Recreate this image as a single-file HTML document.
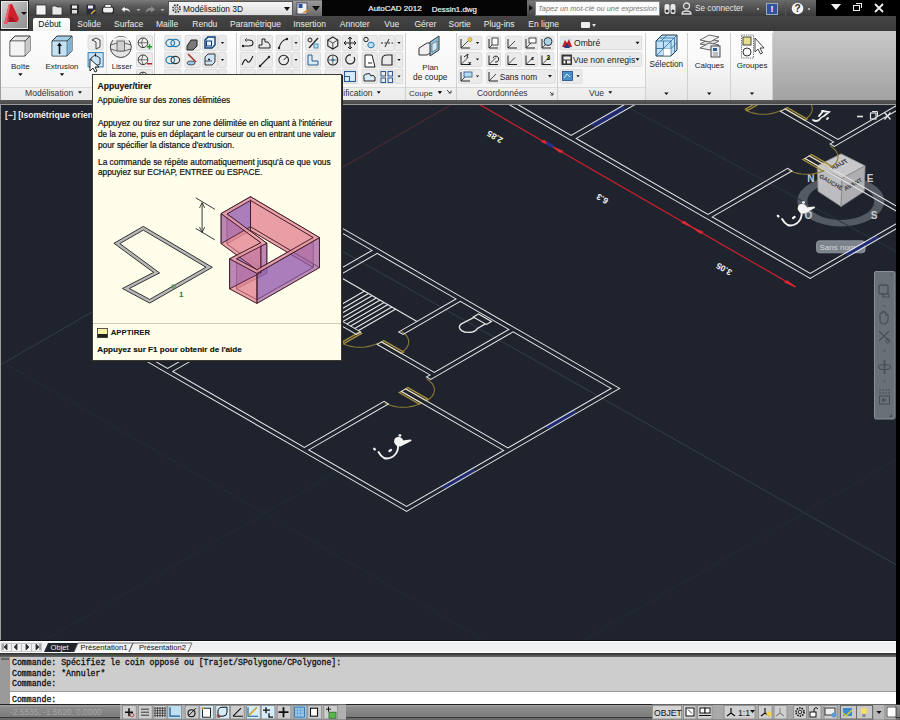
<!DOCTYPE html>
<html><head><meta charset="utf-8">
<style>
*{margin:0;padding:0;box-sizing:border-box}
html,body{width:900px;height:720px;overflow:hidden;background:#1e232d;font-family:"Liberation Sans",sans-serif}
.a{position:absolute}
.t{position:absolute;white-space:nowrap;line-height:1}
</style></head><body>
<div class="a" style="left:0px;top:0px;width:322px;height:16px;background:linear-gradient(#7a7a7a,#5a5a5a 40%,#3e3e3e)"></div>
<div class="a" style="left:322px;top:0px;width:205px;height:16px;background:#050505"></div>
<div class="a" style="left:527px;top:0px;width:289px;height:16px;background:linear-gradient(#6a6a6a,#3a3a3a)"></div>
<div class="a" style="left:816px;top:0px;width:84px;height:17px;background:#000"></div>
<svg class="a" style="left:28px;top:0" width="300" height="17" viewBox="28 0 300 17"><rect x="36" y="5" width="10" height="10" fill="#f4f4f4" stroke="#333" stroke-width="0.8"/><path d="M52,6 h4 l1,1 h5 v8 h-10z" fill="#e8e8e8" stroke="#333" stroke-width="0.8"/><rect x="70" y="4.5" width="9" height="10" rx="1" fill="#2a2a2a"/><rect x="72" y="5.5" width="5" height="3" fill="#eee"/><rect x="72" y="10" width="5" height="3.5" fill="#ddd"/><rect x="86.5" y="4.5" width="9" height="10" rx="1" fill="#2a2a40"/><rect x="88" y="5.5" width="5" height="3" fill="#eee"/><path d="M91,14 l4,-4" stroke="#e0b030" stroke-width="1.5"/><rect x="102.5" y="7" width="11" height="6" rx="2" fill="#f0f0f0" stroke="#222" stroke-width="1.2"/><rect x="105" y="4.5" width="6" height="3" fill="#eee" stroke="#222" stroke-width="0.6"/><path d="M121,9.5 l4,-3.5 v2 c3,0 5,1 5.5,5 c-1.5,-2 -3,-2.5 -5.5,-2.5 v2z" fill="#f0f0f0" stroke="#333" stroke-width="0.5"/><path d="M136.5,9 h4 l-2,2.5z" fill="#aaa"/><path d="M155,9.5 l-4,-3.5 v2 c-3,0 -5,1 -5.5,5 c1.5,-2 3,-2.5 5.5,-2.5 v2z" fill="#8a8a8a"/><path d="M160.5,9 h4 l-2,2.5z" fill="#aaa"/></svg>
<div class="a" style="left:168px;top:1px;width:125px;height:15px;background:linear-gradient(#f6f6f6,#dcdcdc);border:1px solid #555"></div>
<svg class="a" style="left:171px;top:3px" width="11" height="11" viewBox="0 0 11 11"><circle cx="5.5" cy="5.5" r="3.6" fill="none" stroke="#333" stroke-width="1.6" stroke-dasharray="1.6 1.2"/><circle cx="5.5" cy="5.5" r="1.6" fill="none" stroke="#333" stroke-width="0.8"/></svg>
<div class="t" style="left:183.0px;top:5.1px;font-size:8.4px;font-weight:normal;color:#111;font-family:'Liberation Sans';font-style:normal;">Modélisation 3D</div>
<div class="a" style="left:284px;top:7px;border-left:3px solid transparent;border-right:3px solid transparent;border-top:4px solid #111"></div>
<div class="a" style="left:293px;top:1px;width:29px;height:15px;background:linear-gradient(#9a9a9a,#6a6a6a)"></div>
<svg class="a" style="left:296px;top:2px" width="14" height="13" viewBox="0 0 14 13"><rect x="1" y="1" width="10" height="11" fill="#f0f0f0" stroke="#335" stroke-width="0.8"/><rect x="2.5" y="2" width="4" height="4" fill="#2a50a0"/><path d="M6,11 l6,-4 l1,3z" fill="#d08020"/></svg>
<div class="a" style="left:312px;top:6px;border-left:4px solid transparent;border-right:4px solid transparent;border-top:5px solid #111"></div>
<div class="t" style="left:368.3px;top:5.4px;font-size:8.0px;font-weight:normal;color:#f0f0f0;font-family:'Liberation Sans';font-style:normal;-webkit-text-stroke:0.2px #f0f0f0">AutoCAD 2012</div>
<div class="t" style="left:431.7px;top:5.5px;font-size:7.9px;font-weight:normal;color:#f0f0f0;font-family:'Liberation Sans';font-style:normal;-webkit-text-stroke:0.2px #f0f0f0">Dessin1.dwg</div>
<div class="a" style="left:527px;top:1px;width:8px;height:15px;background:linear-gradient(#777,#444)"></div>
<div class="a" style="left:529px;top:5px;border-top:3.5px solid transparent;border-bottom:3.5px solid transparent;border-left:4px solid #111"></div>
<div class="a" style="left:535px;top:1px;width:125px;height:15px;background:#fbfbfb;border:1px solid #888"></div>
<div class="t" style="left:538.0px;top:5.2px;font-size:7.4px;font-weight:normal;color:#777;font-family:'Liberation Sans';font-style:italic;">Tapez un mot-clé ou une expression</div>
<svg class="a" style="left:664px;top:2px" width="12" height="13" viewBox="0 0 12 13"><rect x="0.5" y="2" width="5" height="10" rx="2" fill="#e8e8e8"/><rect x="6.5" y="2" width="5" height="10" rx="2" fill="#e8e8e8"/><circle cx="3" cy="9" r="1.6" fill="#333"/><circle cx="9" cy="9" r="1.6" fill="#333"/></svg>
<svg class="a" style="left:681px;top:2px" width="11" height="13" viewBox="0 0 11 13"><circle cx="5.5" cy="4" r="3" fill="none" stroke="#ddd" stroke-width="1.3"/><path d="M1,12 c0,-4 9,-4 9,0z" fill="none" stroke="#ddd" stroke-width="1.3"/></svg>
<div class="t" style="left:695.0px;top:5.1px;font-size:8.2px;font-weight:normal;color:#e8e8e8;font-family:'Liberation Sans';font-style:normal;">Se connecter</div>
<div class="a" style="left:757px;top:8px;width:2px;height:2px;background:#aaa"></div>
<div class="a" style="left:766px;top:3px;width:12px;height:12px;background:#3050a0;border:1px solid #9ab"></div>
<div class="t" style="left:770.5px;top:4.9px;font-size:9px;font-weight:bold;color:#fff;font-family:'Liberation Sans';font-style:normal;">!</div>
<div class="a" style="left:785px;top:1px;width:1px;height:15px;background:#555"></div>
<svg class="a" style="left:791px;top:2px" width="13" height="13" viewBox="0 0 13 13"><circle cx="6.5" cy="6.5" r="5.8" fill="#f4f4f4"/><text x="6.5" y="10.3" font-family="Liberation Sans" font-weight="bold" font-size="10" text-anchor="middle" fill="#333">?</text></svg>
<div class="a" style="left:808px;top:8px;width:2px;height:2px;background:#aaa"></div>
<div class="a" style="left:831px;top:4px;border-left:5px solid transparent;border-right:5px solid transparent;border-top:6px solid #f0f0f0"></div>
<div class="a" style="left:853px;top:5px;width:7px;height:6px;border:1.5px solid #eee;background:#000"></div>
<div class="a" style="left:856px;top:3px;width:6px;height:5px;border:1.5px solid #eee;border-left:none;border-bottom:none"></div>
<svg class="a" style="left:874px;top:3px" width="10" height="10" viewBox="0 0 10 10"><path d="M1,1 L9,9 M9,1 L1,9" stroke="#f0f0f0" stroke-width="1.8"/></svg>
<div class="a" style="left:0px;top:16px;width:896px;height:15px;background:linear-gradient(#454545,#3a3a3a)"></div>
<div class="a" style="left:33px;top:18px;width:37px;height:13px;background:linear-gradient(#ffffff,#f2f2f2);border-radius:2px 2px 0 0"></div>
<div class="t" style="left:38.3px;top:20.1px;font-size:8.5px;font-weight:normal;color:#111;font-family:'Liberation Sans';font-style:normal;">Début</div>
<div class="t" style="left:77.3px;top:20.1px;font-size:8.5px;font-weight:normal;color:#ececec;font-family:'Liberation Sans';font-style:normal;">Solide</div>
<div class="t" style="left:114.0px;top:20.1px;font-size:8.5px;font-weight:normal;color:#ececec;font-family:'Liberation Sans';font-style:normal;">Surface</div>
<div class="t" style="left:156.0px;top:20.1px;font-size:8.5px;font-weight:normal;color:#ececec;font-family:'Liberation Sans';font-style:normal;">Maille</div>
<div class="t" style="left:192.3px;top:20.1px;font-size:8.5px;font-weight:normal;color:#ececec;font-family:'Liberation Sans';font-style:normal;">Rendu</div>
<div class="t" style="left:230.0px;top:20.1px;font-size:8.5px;font-weight:normal;color:#ececec;font-family:'Liberation Sans';font-style:normal;">Paramétrique</div>
<div class="t" style="left:293.3px;top:20.1px;font-size:8.5px;font-weight:normal;color:#ececec;font-family:'Liberation Sans';font-style:normal;">Insertion</div>
<div class="t" style="left:339.8px;top:20.1px;font-size:8.5px;font-weight:normal;color:#ececec;font-family:'Liberation Sans';font-style:normal;">Annoter</div>
<div class="t" style="left:384.3px;top:20.1px;font-size:8.5px;font-weight:normal;color:#ececec;font-family:'Liberation Sans';font-style:normal;">Vue</div>
<div class="t" style="left:414.5px;top:20.1px;font-size:8.5px;font-weight:normal;color:#ececec;font-family:'Liberation Sans';font-style:normal;">Gérer</div>
<div class="t" style="left:448.6px;top:20.1px;font-size:8.5px;font-weight:normal;color:#ececec;font-family:'Liberation Sans';font-style:normal;">Sortie</div>
<div class="t" style="left:483.8px;top:20.1px;font-size:8.5px;font-weight:normal;color:#ececec;font-family:'Liberation Sans';font-style:normal;">Plug-ins</div>
<div class="t" style="left:528.3px;top:20.1px;font-size:8.5px;font-weight:normal;color:#ececec;font-family:'Liberation Sans';font-style:normal;">En ligne</div>
<div class="a" style="left:581px;top:22px;width:9px;height:6px;background:#eee;border-radius:1px"></div>
<div class="a" style="left:592px;top:24px;border-left:2.5px solid transparent;border-right:2.5px solid transparent;border-top:3px solid #ddd"></div>
<div class="a" style="left:0px;top:0px;width:29px;height:30px;background:linear-gradient(135deg,#d4d4d4,#a4a4a4 60%,#8e8e8e);border:1px solid #1a1a1a;box-shadow:inset 0 0 0 1px #e8e8e8"></div>
<svg class="a" style="left:2px;top:2px" width="24" height="26" viewBox="0 0 24 26"><path d="M2,22 L7,2 L10,2 L17,17 L15,20 L11,15 L7,15 L5,22Z" fill="#d0202c"/><path d="M2,22 L7,2 L8.5,2 L4.5,22Z" fill="#f06070"/><path d="M7,15 L11,15 L15,20 L6,20Z" fill="#b01420"/></svg>
<div class="a" style="left:21px;top:12px;width:0;height:0;border-left:3.5px solid transparent;border-right:3.5px solid transparent;border-top:3.5px solid #111"></div>
<div class="a" style="left:0px;top:31px;width:896px;height:70px;background:linear-gradient(#fdfdfd,#f3f3f3)"></div>
<div class="a" style="left:0px;top:87px;width:646px;height:14px;background:linear-gradient(#f0f0f0,#eaeaea);border-top:1px solid #dadada"></div>
<div class="a" style="left:646px;top:60px;width:127px;height:41px;background:linear-gradient(#f8f8f8,#e6e6e6)"></div>
<div class="a" style="left:773px;top:31px;width:123px;height:70px;background:linear-gradient(#c8c8c8,#a2a2a2)"></div>
<div class="a" style="left:154px;top:33px;width:1px;height:67px;background:#d0d0d0"></div>
<div class="a" style="left:236px;top:33px;width:1px;height:67px;background:#d0d0d0"></div>
<div class="a" style="left:302px;top:33px;width:1px;height:67px;background:#d0d0d0"></div>
<div class="a" style="left:405px;top:33px;width:1px;height:67px;background:#d0d0d0"></div>
<div class="a" style="left:456px;top:33px;width:1px;height:67px;background:#d0d0d0"></div>
<div class="a" style="left:557px;top:33px;width:1px;height:67px;background:#d0d0d0"></div>
<div class="a" style="left:645px;top:33px;width:1px;height:67px;background:#d0d0d0"></div>
<div class="a" style="left:687px;top:33px;width:1px;height:67px;background:#d0d0d0"></div>
<div class="a" style="left:730px;top:33px;width:1px;height:67px;background:#d0d0d0"></div>
<div class="a" style="left:772px;top:33px;width:1px;height:67px;background:#d0d0d0"></div>
<div class="a" style="left:106px;top:33px;width:1px;height:53px;background:#e2e2e2"></div>
<div class="a" style="left:0px;top:31px;width:1px;height:70px;background:#a0a0a0"></div>
<div class="a" style="left:0px;top:100px;width:896px;height:5px;background:linear-gradient(#5a5a5a,#4a4a4a);border-bottom:1px solid #9a9a9a"></div>
<svg class="a" style="left:0;top:31px" width="900" height="70" viewBox="0 31 900 70"><path d="M10,41 l5,-5 h15 v15 l-5,5 h-15z" fill="#e8e8e8" stroke="#333" stroke-width="1"/><path d="M10,41 h15 v15 M25,41 l5,-5" fill="none" stroke="#333" stroke-width="1"/><path d="M10.5,41.5 h14 v14 h-14z" fill="#f4f4f4"/><path d="M25.5,41 l4.5,-4.5 v14.5 l-4.5,4.5z" fill="#c8c8c8"/>
<path d="M18.2,73.28 h4.4 l-2.2,2.64z" fill="#111"/>
<path d="M52,41 l5,-5 h15 v15 l-5,5 h-15z" fill="#a6d0e8" stroke="#333" stroke-width="1"/><path d="M52,41 h15 v15 M67,41 l5,-5" fill="none" stroke="#333" stroke-width="1"/><path d="M52.5,41.5 h14 v14 h-14z" fill="#c4e2f4"/><path d="M67.5,41 l4.5,-4.5 v14.5 l-4.5,4.5z" fill="#7fb4d4"/><path d="M59.5,54 v-9" stroke="#111" stroke-width="1.6"/><path d="M57,46 l2.5,-3.5 l2.5,3.5z" fill="#111"/>
<path d="M59.8,73.28 h4.4 l-2.2,2.64z" fill="#111"/>
<rect x="88.1" y="35.6" width="15.100000000000009" height="14.299999999999997" rx="1" fill="#ebebeb" stroke="#dcdcdc" stroke-width="1"/>
<path d="M92,40 l4,-2 l4,2 v7 l-4,2 v-7 l-4,-2z" fill="#eee" stroke="#333" stroke-width="0.9"/>
<rect x="88.1" y="52.6" width="15.100000000000009" height="14.300000000000004" fill="#c6e2f4" stroke="#3a7ab0" stroke-width="1"/>
<path d="M91,58 l4,-3 l5,3 v6 l-5,2 l-4,-3z" fill="none" stroke="#222" stroke-width="0.9"/><path d="M95.5,53.5 v3" stroke="#111" stroke-width="1"/>
<path d="M90,59 v12 l3,-3 l2,4 l2,-1 l-2,-4 h4z" fill="#fff" stroke="#111" stroke-width="0.9"/>
<circle cx="120.8" cy="47" r="10.5" fill="#e4e4e4" stroke="#444" stroke-width="1"/><path d="M110.5,45 q10,-4 20.5,0 M110.5,49 q10,4 20.5,0" fill="none" stroke="#555" stroke-width="0.9"/><rect x="117" y="41" width="7.5" height="10" fill="#cfcfcf" stroke="#555" stroke-width="0.8"/><path d="M113,40 q8,-5 16,0" fill="none" stroke="#fff" stroke-width="1.5"/>
<rect x="136.5" y="35.6" width="16" height="14.299999999999997" rx="1" fill="#ebebeb" stroke="#dcdcdc" stroke-width="1"/>
<circle cx="143" cy="42.75" r="4.8" fill="#f2f2f2" stroke="#333" stroke-width="1"/><path d="M138.5,42.75 h9 M143,38.25 q-3,4.5 0,9" fill="none" stroke="#333" stroke-width="0.7"/>
<path d="M147,46.75 h5 M149.5,44.25 v5" stroke="#1a9a2a" stroke-width="1.5"/>
<rect x="136.5" y="52.6" width="16" height="14.300000000000004" rx="1" fill="#ebebeb" stroke="#dcdcdc" stroke-width="1"/>
<circle cx="143" cy="59.75" r="4.8" fill="#f2f2f2" stroke="#333" stroke-width="1"/><path d="M138.5,59.75 h9 M143,55.25 q-3,4.5 0,9" fill="none" stroke="#333" stroke-width="0.7"/>
<path d="M147,63.75 h5" stroke="#c02020" stroke-width="1.5"/>
<rect x="136.5" y="69.5" width="16" height="15" rx="1" fill="#ebebeb" stroke="#dcdcdc" stroke-width="1"/>
<circle cx="143" cy="77.0" r="4.8" fill="#f2f2f2" stroke="#333" stroke-width="1"/><path d="M138.5,77.0 h9 M143,72.5 q-3,4.5 0,9" fill="none" stroke="#333" stroke-width="0.7"/>
<rect x="164.8" y="35.4" width="16.0" height="15.100000000000001" rx="1" fill="#ebebeb" stroke="#dcdcdc" stroke-width="1"/>
<rect x="185.1" y="35.4" width="15.099999999999994" height="15.100000000000001" rx="1" fill="#ebebeb" stroke="#dcdcdc" stroke-width="1"/>
<rect x="202.6" y="35.4" width="15.099999999999994" height="15.100000000000001" rx="1" fill="#ebebeb" stroke="#dcdcdc" stroke-width="1"/>
<rect x="218.7" y="35.4" width="7.5" height="15.100000000000001" rx="1" fill="#ebebeb" stroke="#dcdcdc" stroke-width="1"/>
<path d="M220.9,41.99 h3.2 l-1.6,1.92z" fill="#111"/>
<rect x="164.8" y="52.4" width="16.0" height="15.100000000000001" rx="1" fill="#ebebeb" stroke="#dcdcdc" stroke-width="1"/>
<rect x="185.1" y="52.4" width="15.099999999999994" height="15.100000000000001" rx="1" fill="#ebebeb" stroke="#dcdcdc" stroke-width="1"/>
<rect x="202.6" y="52.4" width="15.099999999999994" height="15.100000000000001" rx="1" fill="#ebebeb" stroke="#dcdcdc" stroke-width="1"/>
<rect x="218.7" y="52.4" width="7.5" height="15.100000000000001" rx="1" fill="#ebebeb" stroke="#dcdcdc" stroke-width="1"/>
<path d="M220.9,58.99 h3.2 l-1.6,1.92z" fill="#111"/>
<rect x="164.8" y="69.4" width="16.0" height="14.099999999999994" rx="1" fill="#ebebeb" stroke="#dcdcdc" stroke-width="1"/>
<rect x="185.1" y="69.4" width="15.099999999999994" height="14.099999999999994" rx="1" fill="#ebebeb" stroke="#dcdcdc" stroke-width="1"/>
<rect x="202.6" y="69.4" width="15.099999999999994" height="14.099999999999994" rx="1" fill="#ebebeb" stroke="#dcdcdc" stroke-width="1"/>
<rect x="218.7" y="69.4" width="7.5" height="14.099999999999994" rx="1" fill="#ebebeb" stroke="#dcdcdc" stroke-width="1"/>
<ellipse cx="170.3" cy="43" rx="4.3" ry="3.6" fill="none" stroke="#2e7fb0" stroke-width="1.3"/><ellipse cx="175.3" cy="43" rx="4.3" ry="3.6" fill="none" stroke="#2e7fb0" stroke-width="1.3"/>
<path d="M187,46 l4,-6 h6 v6 l-4,4 h-6z" fill="#7a7a7a" stroke="#222" stroke-width="1"/>
<path d="M205,40 l3,-3 h7 v8 l-3,3 h-7z" fill="#e4f0f8" stroke="#0a3a78" stroke-width="1.4"/><rect x="206.5" y="41" width="5" height="5" fill="none" stroke="#0a3a78" stroke-width="1"/>
<ellipse cx="170.3" cy="60" rx="4.3" ry="3.6" fill="none" stroke="#2e7fb0" stroke-width="1.3"/><ellipse cx="175.3" cy="60" rx="4.3" ry="3.6" fill="none" stroke="#333" stroke-width="1.1"/>
<path d="M188,54 l8,8" stroke="#a03030" stroke-width="1.6"/><ellipse cx="191" cy="63" rx="4" ry="2" fill="#9ec8e8" stroke="#333" stroke-width="0.8"/>
<path d="M205,57 l3,-3 h7 v8 l-3,3 h-7z" fill="#cde4f4" stroke="#333" stroke-width="1"/><path d="M205,61 h7" stroke="#333" stroke-width="0.8"/><circle cx="209" cy="59.5" r="1" fill="#111"/>
<path d="M168.3,86 q4,-3 9,0" fill="none" stroke="#333" stroke-width="1"/>
<path d="M188.6,86 q4,-3 9,0" fill="none" stroke="#333" stroke-width="1"/>
<path d="M206.1,86 q4,-3 9,0" fill="none" stroke="#333" stroke-width="1"/>
<rect x="240.3" y="35.4" width="15.0" height="15.100000000000001" rx="1" fill="#ebebeb" stroke="#dcdcdc" stroke-width="1"/>
<rect x="257.3" y="35.4" width="15.099999999999966" height="15.100000000000001" rx="1" fill="#ebebeb" stroke="#dcdcdc" stroke-width="1"/>
<rect x="276.2" y="35.4" width="15.100000000000023" height="15.100000000000001" rx="1" fill="#ebebeb" stroke="#dcdcdc" stroke-width="1"/>
<rect x="292.3" y="35.4" width="7.5" height="15.100000000000001" rx="1" fill="#ebebeb" stroke="#dcdcdc" stroke-width="1"/>
<path d="M294.4,41.99 h3.2 l-1.6,1.92z" fill="#111"/>
<rect x="240.3" y="52.4" width="15.0" height="15.100000000000001" rx="1" fill="#ebebeb" stroke="#dcdcdc" stroke-width="1"/>
<rect x="257.3" y="52.4" width="15.099999999999966" height="15.100000000000001" rx="1" fill="#ebebeb" stroke="#dcdcdc" stroke-width="1"/>
<rect x="276.2" y="52.4" width="15.100000000000023" height="15.100000000000001" rx="1" fill="#ebebeb" stroke="#dcdcdc" stroke-width="1"/>
<rect x="292.3" y="52.4" width="7.5" height="15.100000000000001" rx="1" fill="#ebebeb" stroke="#dcdcdc" stroke-width="1"/>
<path d="M294.4,58.99 h3.2 l-1.6,1.92z" fill="#111"/>
<rect x="240.3" y="69.4" width="15.0" height="14.099999999999994" rx="1" fill="#ebebeb" stroke="#dcdcdc" stroke-width="1"/>
<rect x="257.3" y="69.4" width="15.099999999999966" height="14.099999999999994" rx="1" fill="#ebebeb" stroke="#dcdcdc" stroke-width="1"/>
<rect x="276.2" y="69.4" width="15.100000000000023" height="14.099999999999994" rx="1" fill="#ebebeb" stroke="#dcdcdc" stroke-width="1"/>
<rect x="292.3" y="69.4" width="7.5" height="14.099999999999994" rx="1" fill="#ebebeb" stroke="#dcdcdc" stroke-width="1"/>
<path d="M243,46 h6 q4,0 4,-3 q0,-3 -4,-3 h-2" fill="none" stroke="#222" stroke-width="1.1"/><circle cx="243" cy="46" r="1.2" fill="#222"/><path d="M247,38.5 l-2,1.5 l2,1.5" fill="none" stroke="#222" stroke-width="0.9"/>
<path d="M259,48 h11 v-3 l-2,-3 h-3 v-3 h-3 v6 l-3,0z" fill="#e8e8e8" stroke="#222" stroke-width="1"/>
<path d="M279,48 q2,-8 8,-9" fill="none" stroke="#222" stroke-width="1.1"/><circle cx="279" cy="48" r="1.2" fill="#222"/><circle cx="287" cy="39" r="1.2" fill="#222"/>
<path d="M242,65 q3,-8 5,-4 q2,4 6,-5" fill="none" stroke="#222" stroke-width="1.1"/>
<path d="M260,66 l9,-9" stroke="#222" stroke-width="1.1"/><circle cx="260" cy="66" r="1.2" fill="#222"/><circle cx="269" cy="57" r="1.2" fill="#222"/>
<circle cx="283.7" cy="60" r="4.8" fill="none" stroke="#222" stroke-width="1.1"/><path d="M283.7,60 l3,-3" stroke="#222" stroke-width="1"/>
<path d="M243.8,86 l4,-3 l4,3" fill="none" stroke="#333" stroke-width="1"/>
<path d="M260.8,86 l4,-3 l4,3" fill="none" stroke="#333" stroke-width="1"/>
<path d="M279.7,86 l4,-3 l4,3" fill="none" stroke="#333" stroke-width="1"/>
<rect x="305.5" y="35.4" width="15" height="15.100000000000001" rx="1" fill="#ebebeb" stroke="#dcdcdc" stroke-width="1"/>
<rect x="325.3" y="35.4" width="15.099999999999966" height="15.100000000000001" rx="1" fill="#ebebeb" stroke="#dcdcdc" stroke-width="1"/>
<rect x="342.4" y="35.4" width="15.0" height="15.100000000000001" rx="1" fill="#ebebeb" stroke="#dcdcdc" stroke-width="1"/>
<rect x="362.2" y="35.4" width="15.100000000000023" height="15.100000000000001" rx="1" fill="#ebebeb" stroke="#dcdcdc" stroke-width="1"/>
<rect x="379.2" y="35.4" width="15.100000000000023" height="15.100000000000001" rx="1" fill="#ebebeb" stroke="#dcdcdc" stroke-width="1"/>
<rect x="395.3" y="35.4" width="7.5" height="15.100000000000001" rx="1" fill="#ebebeb" stroke="#dcdcdc" stroke-width="1"/>
<path d="M397.4,41.99 h3.2 l-1.6,1.92z" fill="#111"/>
<rect x="305.5" y="52.4" width="15" height="15.100000000000001" rx="1" fill="#ebebeb" stroke="#dcdcdc" stroke-width="1"/>
<rect x="325.3" y="52.4" width="15.099999999999966" height="15.100000000000001" rx="1" fill="#ebebeb" stroke="#dcdcdc" stroke-width="1"/>
<rect x="342.4" y="52.4" width="15.0" height="15.100000000000001" rx="1" fill="#ebebeb" stroke="#dcdcdc" stroke-width="1"/>
<rect x="362.2" y="52.4" width="15.100000000000023" height="15.100000000000001" rx="1" fill="#ebebeb" stroke="#dcdcdc" stroke-width="1"/>
<rect x="379.2" y="52.4" width="15.100000000000023" height="15.100000000000001" rx="1" fill="#ebebeb" stroke="#dcdcdc" stroke-width="1"/>
<rect x="395.3" y="52.4" width="7.5" height="15.100000000000001" rx="1" fill="#ebebeb" stroke="#dcdcdc" stroke-width="1"/>
<path d="M397.4,58.99 h3.2 l-1.6,1.92z" fill="#111"/>
<rect x="305.5" y="69.4" width="15" height="14.099999999999994" rx="1" fill="#ebebeb" stroke="#dcdcdc" stroke-width="1"/>
<rect x="325.3" y="69.4" width="15.099999999999966" height="14.099999999999994" rx="1" fill="#ebebeb" stroke="#dcdcdc" stroke-width="1"/>
<rect x="342.4" y="69.4" width="15.0" height="14.099999999999994" rx="1" fill="#ebebeb" stroke="#dcdcdc" stroke-width="1"/>
<rect x="362.2" y="69.4" width="15.100000000000023" height="14.099999999999994" rx="1" fill="#ebebeb" stroke="#dcdcdc" stroke-width="1"/>
<rect x="379.2" y="69.4" width="15.100000000000023" height="14.099999999999994" rx="1" fill="#ebebeb" stroke="#dcdcdc" stroke-width="1"/>
<rect x="395.3" y="69.4" width="7.5" height="14.099999999999994" rx="1" fill="#ebebeb" stroke="#dcdcdc" stroke-width="1"/>
<path d="M397.4,75.49000000000001 h3.2 l-1.6,1.92z" fill="#111"/>
<path d="M309,48 l9,-10" stroke="#222" stroke-width="1.2"/><circle cx="310" cy="40" r="2" fill="none" stroke="#222" stroke-width="1"/><rect x="314" y="44" width="4" height="4" fill="#bfe0f0" stroke="#2a7ab0" stroke-width="0.8"/>
<path d="M332.8,37 l5,3 v6 l-5,3 l-5,-3 v-6z" fill="none" stroke="#222" stroke-width="1.1"/><path d="M332.8,43 v6 M332.8,43 l5,-3 M332.8,43 l-5,-3" stroke="#222" stroke-width="0.8"/>
<path d="M350,37 v12 M344,43 h12" stroke="#222" stroke-width="1.2"/><path d="M348,39 l2,-2 l2,2 M348,47 l2,2 l2,-2 M346,41 l-2,2 l2,2 M354,41 l2,2 l-2,2" fill="none" stroke="#222" stroke-width="1"/>
<circle cx="366" cy="39.5" r="2.2" fill="none" stroke="#222" stroke-width="1"/><ellipse cx="371" cy="45" rx="3.2" ry="2.8" fill="#bfe0f0" stroke="#2a7ab0" stroke-width="1"/>
<path d="M381,43 h12" stroke="#222" stroke-width="1" stroke-dasharray="2 1.5"/><path d="M385,47 l4,-8" stroke="#222" stroke-width="1"/>
<path d="M308,55 h4 v6 h6 v4 h-10z" fill="#d8ecf8" stroke="#2a5a90" stroke-width="1"/>
<circle cx="332.8" cy="60" r="5" fill="none" stroke="#222" stroke-width="1.1"/><path d="M327.8,60 h10 M332.8,55 v10" stroke="#555" stroke-width="0.8"/><circle cx="332.8" cy="60" r="1.5" fill="#2a7ab0"/>
<path d="M354,57 a4.5,4.5 0 1 1 -3,-2" fill="none" stroke="#222" stroke-width="1.2"/>
<path d="M365,55 h7 l3,12 h-10z" fill="#fff" stroke="#222" stroke-width="1"/><path d="M368,63 h4" stroke="#222" stroke-width="1"/>
<path d="M382,65 v-5 q0,-5 5,-5 h5 v10z" fill="none" stroke="#222" stroke-width="1.1"/>
<rect x="306" y="80" width="6" height="4" fill="none" stroke="#222" stroke-width="1"/><path d="M329,83 v-6" stroke="#222" stroke-width="1"/>
<rect x="344.5" y="71.5" width="11" height="10" fill="#d8ecf8" stroke="#2a5a90" stroke-width="1.1"/><rect x="344.5" y="76.5" width="5" height="5" fill="none" stroke="#2a5a90" stroke-width="1"/>
<path d="M364,81 h11 v-4 q-2,-3 -4,-1 q-1,-4 -4,-2 q-4,0 -3,4z" fill="#d8ecf8" stroke="#222" stroke-width="1"/>
<rect x="381" y="71.5" width="4.5" height="4.5" fill="none" stroke="#2a5a90" stroke-width="1"/><rect x="388" y="71.5" width="4.5" height="4.5" fill="none" stroke="#2a5a90" stroke-width="1"/><rect x="381" y="78" width="4.5" height="4.5" fill="none" stroke="#2a5a90" stroke-width="1"/><rect x="388" y="78" width="4.5" height="4.5" fill="none" stroke="#2a5a90" stroke-width="1"/>
<path d="M419,48 l8,-5 h8 v7 l-8,5 h-8z" fill="#f0f0f0" stroke="#333" stroke-width="1"/><path d="M430,42 l9,-6 v14 l-9,6z" fill="#8ac0e0" stroke="#333" stroke-width="1"/><path d="M432,44 l5,-3 v8 l-5,3z" fill="#d0e8f6" stroke="#555" stroke-width="0.6"/>
<path d="M438,91.3 h4 l-2,2.4z" fill="#111"/>
<path d="M447,90 l3,3 M451,90.5 v2.5 h-2.5" fill="none" stroke="#333" stroke-width="0.9"/>
<rect x="458.8" y="36.2" width="23.0" height="13.599999999999994" rx="1" fill="#ebebeb" stroke="#dcdcdc" stroke-width="1"/>
<path d="M475.9,42.04 h3.2 l-1.6,1.92z" fill="#111"/>
<rect x="486.8" y="36.2" width="13.699999999999989" height="13.599999999999994" rx="1" fill="#ebebeb" stroke="#dcdcdc" stroke-width="1"/>
<rect x="505.5" y="36.2" width="16.299999999999955" height="13.599999999999994" rx="1" fill="#ebebeb" stroke="#dcdcdc" stroke-width="1"/>
<rect x="524.2" y="36.2" width="13.599999999999909" height="13.599999999999994" rx="1" fill="#ebebeb" stroke="#dcdcdc" stroke-width="1"/>
<rect x="540.2" y="36.2" width="13.599999999999909" height="13.599999999999994" rx="1" fill="#ebebeb" stroke="#dcdcdc" stroke-width="1"/>
<rect x="458.8" y="52.7" width="23.0" height="13.700000000000003" rx="1" fill="#ebebeb" stroke="#dcdcdc" stroke-width="1"/>
<path d="M475.9,58.59 h3.2 l-1.6,1.92z" fill="#111"/>
<rect x="486.8" y="52.7" width="13.699999999999989" height="13.700000000000003" rx="1" fill="#ebebeb" stroke="#dcdcdc" stroke-width="1"/>
<rect x="505.5" y="52.7" width="16.299999999999955" height="13.700000000000003" rx="1" fill="#ebebeb" stroke="#dcdcdc" stroke-width="1"/>
<rect x="524.2" y="52.7" width="13.599999999999909" height="13.700000000000003" rx="1" fill="#ebebeb" stroke="#dcdcdc" stroke-width="1"/>
<rect x="540.2" y="52.7" width="13.599999999999909" height="13.700000000000003" rx="1" fill="#ebebeb" stroke="#dcdcdc" stroke-width="1"/>
<rect x="458.8" y="69.5" width="23.0" height="13.700000000000003" rx="1" fill="#ebebeb" stroke="#dcdcdc" stroke-width="1"/>
<path d="M475.9,75.39 h3.2 l-1.6,1.92z" fill="#111"/>
<rect x="486.8" y="69.5" width="68.40000000000003" height="13.700000000000003" rx="1" fill="#ebebeb" stroke="#dcdcdc" stroke-width="1"/>
<path d="M548,75.1 h4 l-2,2.4z" fill="#111"/>
<path d="M461,39 v9 h9" fill="none" stroke="#222" stroke-width="1"/><path d="M461,48 l7,-7" stroke="#222" stroke-width="0.8"/>
<circle cx="470" cy="39.5" r="2" fill="#f0d040" stroke="#a08020" stroke-width="0.6"/>
<path d="M461,55.5 v9 h9" fill="none" stroke="#222" stroke-width="1"/><path d="M461,64.5 l7,-7" stroke="#222" stroke-width="0.8"/>
<path d="M464,57 l4,-3 l-1,4" fill="none" stroke="#222" stroke-width="1"/><text x="468" y="65" font-size="6" font-family="Liberation Sans" font-weight="bold">x</text>
<path d="M461,72 v9 h9" fill="none" stroke="#222" stroke-width="1"/><path d="M461,81 l7,-7" stroke="#222" stroke-width="0.8"/>
<rect x="464" y="72" width="8" height="5" fill="#b6daf0" stroke="#2a5a90" stroke-width="0.8"/>
<path d="M489,39 v9 h9" fill="none" stroke="#222" stroke-width="1"/><path d="M489,48 l7,-7" stroke="#222" stroke-width="0.8"/>
<rect x="492" y="38" width="6" height="7" fill="#fff" stroke="#222" stroke-width="0.8"/>
<path d="M489,55.5 v9 h9" fill="none" stroke="#222" stroke-width="1"/><path d="M489,64.5 l7,-7" stroke="#222" stroke-width="0.8"/>
<path d="M493,58 a3,3 0 1 1 2,4" fill="none" stroke="#222" stroke-width="1"/>
<path d="M508,39 v9 h9" fill="none" stroke="#222" stroke-width="1"/><path d="M508,48 l7,-7" stroke="#222" stroke-width="0.8"/>
<path d="M508,55.5 v9 h9" fill="none" stroke="#222" stroke-width="1"/><path d="M508,64.5 l7,-7" stroke="#222" stroke-width="0.8"/>
<path d="M526,39 v9 h9" fill="none" stroke="#222" stroke-width="1"/><path d="M526,48 l7,-7" stroke="#222" stroke-width="0.8"/>
<rect x="529" y="38" width="7" height="5" fill="#fff" stroke="#222" stroke-width="0.8"/>
<path d="M526,55.5 v9 h9" fill="none" stroke="#222" stroke-width="1"/><path d="M526,64.5 l7,-7" stroke="#222" stroke-width="0.8"/>
<text x="531" y="60" font-size="6" font-family="Liberation Sans" font-weight="bold">z</text>
<path d="M542,39 v9 h9" fill="none" stroke="#222" stroke-width="1"/><path d="M542,48 l7,-7" stroke="#222" stroke-width="0.8"/>
<circle cx="548" cy="41.5" r="4" fill="#a8d4ec" stroke="#222" stroke-width="0.9"/>
<path d="M542,55.5 v9 h9" fill="none" stroke="#222" stroke-width="1"/><path d="M542,64.5 l7,-7" stroke="#222" stroke-width="0.8"/>
<text x="546.5" y="60" font-size="6.5" font-family="Liberation Sans" font-weight="bold">3</text>
<path d="M489,72 v9 h9" fill="none" stroke="#222" stroke-width="1"/><path d="M489,81 l7,-7" stroke="#222" stroke-width="0.8"/>
<path d="M550,92 l3,3 M553,92.5 v2.5 h-2.5" fill="none" stroke="#333" stroke-width="0.9"/>
<rect x="560.2" y="36.2" width="81.59999999999991" height="13.599999999999994" rx="1" fill="#ebebeb" stroke="#dcdcdc" stroke-width="1"/>
<rect x="560.2" y="52.7" width="81.59999999999991" height="13.700000000000003" rx="1" fill="#ebebeb" stroke="#dcdcdc" stroke-width="1"/>
<rect x="560.2" y="69.5" width="21.59999999999991" height="13.700000000000003" rx="1" fill="#ebebeb" stroke="#dcdcdc" stroke-width="1"/>
<rect x="561.5" y="37.5" width="10.5" height="11" fill="#dfe6f0"/><path d="M562,47 l3,-7 l2,3 l2,-4 l3,8z" fill="#c02020"/><path d="M564,48 l3,-5 l3,5z" fill="#203a90"/>
<path d="M635.5,41.8 h4 l-2,2.4z" fill="#111"/>
<rect x="561.5" y="54.5" width="10.5" height="10.5" fill="#333"/><rect x="563.5" y="56.5" width="7" height="3" fill="#eee"/><rect x="563.5" y="60.5" width="2" height="3" fill="#eee"/><rect x="567" y="60.5" width="3.5" height="3" fill="#eee"/>
<path d="M635.5,58.3 h4 l-2,2.4z" fill="#111"/>
<rect x="562.5" y="71.5" width="10" height="9" fill="#4a90c8" stroke="#1a4a80" stroke-width="0.8"/><path d="M564,78 l3,-4 l3,3" fill="none" stroke="#fff" stroke-width="0.8"/>
<path d="M576.4,75.34 h3.2 l-1.6,1.92z" fill="#111"/>
<path d="M608.3,91.3 h4 l-2,2.4z" fill="#111"/>
<path d="M78,91.3 h4 l-2,2.4z" fill="#111"/>
<path d="M376.75,91.3 h4 l-2,2.4z" fill="#111"/>
<path d="M437.7,91.3 h4 l-2,2.4z" fill="#111"/>
<path d="M656,41 l6,-6 h15 v15 l-6,6 h-15z" fill="#bfe2f6" stroke="#234" stroke-width="1"/><path d="M656,41 h15 v15 M671,41 l6,-6 M663.5,41 v15 M656,48.5 h15 M659,38 h15 M662,35 v0 M667,35 l-6,6 M674.5,38 v15 M671,48.5 l6,-6" fill="none" stroke="#2a6aa0" stroke-width="0.8"/><path d="M663.5,48.5 h7 v7 h-7z" fill="#fff"/><path d="M656,56 l15,-15" stroke="#2a6aa0" stroke-width="0.8"/>
<path d="M664.1999999999999,92.48 h4.4 l-2.2,2.64z" fill="#111"/>
<path d="M700,44 l9,-5 l10,2 l-9,5z" fill="#ddd" stroke="#444" stroke-width="0.8"/><path d="M700,48 l9,-5 l10,2 l-9,5z" fill="#eee" stroke="#444" stroke-width="0.8"/><path d="M700,40 l9,-5 l10,2 l-9,5z" fill="#f4f4f4" stroke="#444" stroke-width="0.8"/><rect x="711" y="46" width="9" height="11" fill="#e8eef4" stroke="#333" stroke-width="0.9"/><rect x="713" y="48" width="4" height="3" fill="#2a5a90"/><path d="M713,53 h5 M713,55 h5" stroke="#555" stroke-width="0.6"/>
<path d="M707.0,92.48 h4.4 l-2.2,2.64z" fill="#111"/>
<rect x="741.5" y="35" width="12" height="23" fill="none" stroke="#444" stroke-width="0.8" stroke-dasharray="1.2 1"/><rect x="743" y="37" width="8" height="8" fill="#e8e090" stroke="#333" stroke-width="0.9"/><circle cx="747" cy="52" r="4" fill="none" stroke="#333" stroke-width="1"/><path d="M755,38 v14 l3,-3 l2.5,5 l2,-1 l-2.5,-5 h4z" fill="#fff" stroke="#333" stroke-width="0.9"/>
<path d="M749.8,92.48 h4.4 l-2.2,2.64z" fill="#111"/></svg>
<div class="t" style="left:11.0px;top:62.7px;font-size:8.05px;font-weight:normal;color:#222;font-family:'Liberation Sans';font-style:normal;">Boîte</div>
<div class="t" style="left:45.6px;top:62.8px;font-size:7.9px;font-weight:normal;color:#222;font-family:'Liberation Sans';font-style:normal;">Extrusion</div>
<div class="t" style="left:111.7px;top:63.1px;font-size:7.6px;font-weight:normal;color:#222;font-family:'Liberation Sans';font-style:normal;">Lisser</div>
<div class="t" style="left:25.0px;top:89.2px;font-size:8.6px;font-weight:normal;color:#333;font-family:'Liberation Sans';font-style:normal;">Modélisation</div>
<div class="t" style="left:409.0px;top:89.6px;font-size:8.1px;font-weight:normal;color:#333;font-family:'Liberation Sans';font-style:normal;">Coupe</div>
<div class="t" style="left:326.6px;top:89.2px;font-size:8.6px;font-weight:normal;color:#333;font-family:'Liberation Sans';font-style:normal;">Modification</div>
<div class="t" style="left:477.0px;top:89.4px;font-size:8.44px;font-weight:normal;color:#333;font-family:'Liberation Sans';font-style:normal;">Coordonnées</div>
<div class="t" style="left:589.0px;top:89.2px;font-size:8.6px;font-weight:normal;color:#333;font-family:'Liberation Sans';font-style:normal;">Vue</div>
<div class="t" style="left:422.3px;top:63.7px;font-size:8.0px;font-weight:normal;color:#222;font-family:'Liberation Sans';font-style:normal;">Plan</div>
<div class="t" style="left:413.0px;top:73.4px;font-size:8.4px;font-weight:normal;color:#222;font-family:'Liberation Sans';font-style:normal;">de coupe</div>
<div class="t" style="left:649.6px;top:61.4px;font-size:8.17px;font-weight:normal;color:#222;font-family:'Liberation Sans';font-style:normal;">Sélection</div>
<div class="t" style="left:694.7px;top:61.5px;font-size:8.0px;font-weight:normal;color:#222;font-family:'Liberation Sans';font-style:normal;">Calques</div>
<div class="t" style="left:736.7px;top:61.5px;font-size:8.03px;font-weight:normal;color:#222;font-family:'Liberation Sans';font-style:normal;">Groupes</div>
<div class="t" style="left:499.7px;top:73.0px;font-size:8.3px;font-weight:normal;color:#222;font-family:'Liberation Sans';font-style:normal;">Sans nom</div>
<div class="t" style="left:574.0px;top:39.2px;font-size:8.6px;font-weight:normal;color:#222;font-family:'Liberation Sans';font-style:normal;">Ombré</div>
<div class="t" style="left:573.0px;top:56.2px;font-size:8.6px;font-weight:normal;color:#222;font-family:'Liberation Sans';font-style:normal;">Vue non enregis</div>
<svg class="a" style="left:0;top:105px" width="896" height="537" viewBox="0 105 896 537"><rect x="0" y="105" width="896" height="537" fill="#1e232d"/><path d="M797.3,201.2 a43.5,25.2 0 1 0 87,0 a43.5,25.2 0 1 0 -87,0 Z M807.3,201.2 a33.5,18.8 0 1 0 67,0 a33.5,18.8 0 1 0 -67,0 Z" fill="#535a64" fill-rule="evenodd"/>
<text x="810.8" y="182" font-family="Liberation Sans" font-weight="bold" font-size="10" fill="#c8ccd2" text-anchor="middle">N</text>
<text x="870" y="182" font-family="Liberation Sans" font-weight="bold" font-size="10" fill="#c8ccd2" text-anchor="middle">E</text>
<text x="808.4" y="218.5" font-family="Liberation Sans" font-weight="bold" font-size="10" fill="#c8ccd2" text-anchor="middle">O</text>
<text x="874" y="219" font-family="Liberation Sans" font-weight="bold" font-size="10" fill="#c8ccd2" text-anchor="middle">S</text>
<path d="M841.1,153.8 L865.1,165.8 L841.9,178.5 L817.2,165.8Z" fill="#cfcfd2" fill-opacity="0.96" stroke="#8a8a8a" stroke-width="0.8"/>
<path d="M817.2,165.8 L841.9,178.5 L841.1,206.5 L818.0,191.3Z" fill="#c4c4c8" fill-opacity="0.96" stroke="#8a8a8a" stroke-width="0.8"/>
<path d="M841.9,178.5 L865.1,165.8 L864.3,191.3 L841.1,206.5Z" fill="#b4b4b8" fill-opacity="0.96" stroke="#8a8a8a" stroke-width="0.8"/>
<text x="0" y="0" transform="translate(841,166) rotate(-28) skewX(20)" font-family="Liberation Sans" font-weight="bold" font-size="6.5" fill="#3a3a3a" text-anchor="middle">HAUT</text>
<text x="0" y="0" transform="translate(830,184) rotate(30)" font-family="Liberation Sans" font-weight="bold" font-size="6" fill="#3a3a3a" text-anchor="middle">GAUCHE</text>
<text x="0" y="0" transform="translate(854,186) rotate(-30)" font-family="Liberation Sans" font-weight="bold" font-size="6" fill="#3a3a3a" text-anchor="middle">AVANT</text>
<rect x="816.5" y="240.8" width="48.6" height="12" rx="3" fill="#7d838b" stroke="#9aa0a8" stroke-width="0.8"/>
<text x="819.5" y="250" font-family="Liberation Sans" font-size="8" fill="#d4d8dc">Sans nom</text>
<path d="M857,116.5 h6" stroke="#e4e4e4" stroke-width="1.6"/>
<rect x="870.5" y="113" width="5.5" height="6" fill="none" stroke="#e4e4e4" stroke-width="1.2"/><path d="M872,111.5 h5.5 v5" fill="none" stroke="#e4e4e4" stroke-width="1"/>
<path d="M884.5,112.5 l6,7 M890.5,112.5 l-6,7" stroke="#e4e4e4" stroke-width="1.3"/>
<rect x="874.5" y="271.5" width="20.5" height="147.5" rx="1.5" fill="#6a7078" stroke="#8a9098" stroke-width="1"/>
<path d="M892,274 l-2,0 l2,2z" fill="#484e56"/>
<rect x="879" y="285" width="9" height="9" rx="2" fill="none" stroke="#484e56" stroke-width="1.3"/><path d="M883,294 v3 h6 v-4" fill="none" stroke="#484e56" stroke-width="1.2"/>
<circle cx="884.5" cy="306" r="0.8" fill="#484e56"/>
<path d="M880,320 v-6 q1,-2 2,0 v-2 q1,-2 2,0 v1 q1,-2 2,0 v2 q1,-1 2,0 v5 q-1,4 -4,4 q-4,0 -4,-4z" fill="none" stroke="#484e56" stroke-width="1.2"/>
<path d="M879,331 l10,10 M889,331 l-10,10" stroke="#484e56" stroke-width="1.3"/><circle cx="888" cy="341" r="2" fill="none" stroke="#484e56" stroke-width="1"/>
<circle cx="884.5" cy="351" r="0.8" fill="#484e56"/>
<ellipse cx="884.5" cy="367" rx="6" ry="2.5" fill="none" stroke="#484e56" stroke-width="1.2"/><path d="M884.5,360 v14" stroke="#484e56" stroke-width="1.6"/>
<circle cx="884.5" cy="381" r="0.8" fill="#484e56"/>
<path d="M879,390 h11 M879,393 h11" stroke="#484e56" stroke-width="1" stroke-dasharray="2 1"/><rect x="879.5" y="396" width="10" height="8" fill="none" stroke="#484e56" stroke-width="1.1"/><path d="M882,398 l5,2 l-5,2z" fill="#484e56"/>
<path d="M892,414 l-3,3 h3z" fill="#484e56"/><path d="M-183.2,470.9 L345.1,165.9" stroke="#363d4a" stroke-width="1" fill="none"/>
<path d="M342,251 L900,567" stroke="#363d4a" stroke-width="1" fill="none"/>
<path d="M560,70.5 L900,253.6" stroke="#2c3340" stroke-width="1" fill="none"/>
<path d="M-185.8,253.4 L853.5,853.4" stroke="#252b36" stroke-width="1" fill="none"/>
<path d="M-9.1,671.4 L337.3,471.4" stroke="#252b36" stroke-width="1" fill="none"/>
<path d="M520.0,676.9 L1212.9,276.9" stroke="#252b36" stroke-width="1" fill="none"/>
<path d="M336.5,170.9 L465.5,96.4" stroke="#5a2a34" stroke-width="1" fill="none"/>
<path d="M417.0,321.4 L338.2,275.9" stroke="#e4e4e4" stroke-width="1.2" fill="none"/>
<path d="M358.5,330.6 L395.8,309.1M354.6,328.4 L391.9,306.9M350.7,326.1 L388.0,304.6M346.8,323.9 L384.1,302.4M342.9,321.6 L380.2,300.1M339.1,319.4 L376.3,297.9M335.2,317.1 L372.4,295.6M331.3,314.9 L368.5,293.4M327.4,312.6 L364.6,291.1" stroke="#e4e4e4" stroke-width="1.2" fill="none"/>
<path d="M486.3,324.4 L491.5,321.4 L478.5,313.9 L473.3,316.9Z" stroke="#e4e4e4" stroke-width="1.2" fill="none"/>
<path d="M485.4,323.9 L477.4,328.5 L476.0,330.2 L473.8,331.5 L470.9,332.3 L467.7,332.4 L464.6,332.0 L462.0,330.9 L460.2,329.4 L459.4,327.6 L459.6,325.8 L461.0,324.1 L463.3,322.8 L474.1,317.4" stroke="#e4e4e4" stroke-width="1.4" fill="none"/>
<path d="M444.5,488.3 L474.8,470.8 L472.6,469.5 L442.3,487.0Z" fill="#1e2866" stroke="#283690" stroke-width="1"/>
<path d="M548.5,428.3 L576.2,412.3 L573.9,411.0 L546.2,427.0Z" fill="#1e2866" stroke="#283690" stroke-width="1"/>
<path d="M191.7,359.3 L222.0,341.8 L218.8,340.0 L188.5,357.5Z" fill="#1e2866" stroke="#283690" stroke-width="1"/>
<path d="M344.2,343.4 L361.6,333.4 L359.4,332.1 L342.1,342.1Z" fill="none" stroke="#a48e3c" stroke-width="1.3"/>
<path d="M401.4,353.4 L403.6,352.1 L383.7,340.6 L381.5,341.9Z" fill="none" stroke="#a48e3c" stroke-width="1.3"/>
<path d="M419.2,404.1 L421.3,402.9 L401.4,391.4 L399.2,392.6Z" fill="none" stroke="#a48e3c" stroke-width="1.3"/>
<path d="M425.7,400.4 L427.8,399.1 L407.9,387.6 L405.7,388.9Z" fill="none" stroke="#a48e3c" stroke-width="1.3"/>
<path d="M341.6,342.9 L343.5,343.9 L345.5,344.7 L347.7,345.5 L350.0,346.1 L352.4,346.6 L354.8,347.0 L357.3,347.2 L359.8,347.2 L362.4,347.2 L364.9,347.0 L367.3,346.6 L369.7,346.1 L372.0,345.5 L374.1,344.7 L376.2,343.9 L378.0,342.9M401.0,352.6 L402.7,351.5 L404.2,350.3 L405.6,349.1 L406.7,347.7 L407.5,346.3 L408.2,344.9 L408.6,343.4 L408.7,341.9 L408.6,340.4 L408.2,338.9 L407.5,337.5 L406.7,336.1 L405.6,334.7 L404.2,333.5 L402.7,332.3 L401.0,331.1M384.9,402.9 L386.8,403.9 L388.8,404.7 L391.0,405.5 L393.3,406.1 L395.7,406.6 L398.1,407.0 L400.6,407.2 L403.1,407.2 L405.7,407.2 L408.2,407.0 L410.6,406.6 L413.0,406.1 L415.3,405.5 L417.4,404.7 L419.5,403.9 L421.3,402.9M426.5,400.9 L428.3,399.8 L429.9,398.5 L431.2,397.2 L432.4,395.9 L433.3,394.4 L433.9,392.9 L434.3,391.4 L434.4,389.9 L434.3,388.4 L433.9,386.9 L433.3,385.4 L432.4,383.9 L431.2,382.6 L429.9,381.3 L428.3,380.0 L426.5,378.9" fill="none" stroke="#8c7a34" stroke-width="1.1"/>
<path d="M820.6,88.4 L741.8,42.9" stroke="#e4e4e4" stroke-width="1.2" fill="none"/>
<path d="M762.1,97.6 L799.3,76.1M758.2,95.4 L795.4,73.9M754.3,93.1 L791.5,71.6M750.4,90.9 L787.7,69.4M746.5,88.6 L783.8,67.1M742.6,86.4 L779.9,64.9M738.7,84.1 L776.0,62.6M734.8,81.9 L772.1,60.4M730.9,79.6 L768.2,58.1" stroke="#e4e4e4" stroke-width="1.2" fill="none"/>
<path d="M889.8,91.4 L895.0,88.4 L882.0,80.9 L876.9,83.9Z" stroke="#e4e4e4" stroke-width="1.2" fill="none"/>
<path d="M889.0,90.9 L881.0,95.5 L879.6,97.2 L877.4,98.5 L874.5,99.3 L871.3,99.4 L868.2,99.0 L865.6,97.9 L863.8,96.4 L862.9,94.6 L863.2,92.8 L864.6,91.1 L866.8,89.8 L877.7,84.4" stroke="#e4e4e4" stroke-width="1.4" fill="none"/>
<path d="M848.1,255.3 L878.4,237.8 L876.2,236.5 L845.8,254.0Z" fill="#1e2866" stroke="#283690" stroke-width="1"/>
<path d="M952.0,195.3 L979.7,179.3 L977.5,178.0 L949.8,194.0Z" fill="#1e2866" stroke="#283690" stroke-width="1"/>
<path d="M595.2,126.3 L625.5,108.8 L622.4,107.0 L592.1,124.5Z" fill="#1e2866" stroke="#283690" stroke-width="1"/>
<path d="M747.8,110.4 L765.1,100.4 L763.0,99.1 L745.6,109.1Z" fill="none" stroke="#a48e3c" stroke-width="1.3"/>
<path d="M805.0,120.4 L807.1,119.1 L787.2,107.6 L785.1,108.9Z" fill="none" stroke="#a48e3c" stroke-width="1.3"/>
<path d="M822.7,171.1 L824.9,169.9 L805.0,158.4 L802.8,159.6Z" fill="none" stroke="#a48e3c" stroke-width="1.3"/>
<path d="M829.2,167.4 L831.4,166.1 L811.5,154.6 L809.3,155.9Z" fill="none" stroke="#a48e3c" stroke-width="1.3"/>
<path d="M745.2,109.9 L747.1,110.9 L749.1,111.7 L751.3,112.5 L753.6,113.1 L755.9,113.6 L758.4,114.0 L760.9,114.2 L763.4,114.2 L765.9,114.2 L768.4,114.0 L770.9,113.6 L773.2,113.1 L775.5,112.5 L777.7,111.7 L779.7,110.9 L781.6,109.9M804.5,119.6 L806.3,118.5 L807.8,117.3 L809.1,116.1 L810.2,114.7 L811.1,113.3 L811.7,111.9 L812.1,110.4 L812.3,108.9 L812.1,107.4 L811.7,105.9 L811.1,104.5 L810.2,103.1 L809.1,101.7 L807.8,100.5 L806.3,99.3 L804.5,98.1M788.5,169.9 L790.4,170.9 L792.4,171.7 L794.6,172.5 L796.9,173.1 L799.2,173.6 L801.7,174.0 L804.2,174.2 L806.7,174.2 L809.2,174.2 L811.7,174.0 L814.2,173.6 L816.5,173.1 L818.8,172.5 L821.0,171.7 L823.0,170.9 L824.9,169.9M830.1,167.9 L831.9,166.8 L833.4,165.5 L834.8,164.2 L835.9,162.9 L836.8,161.4 L837.5,159.9 L837.8,158.4 L838.0,156.9 L837.8,155.4 L837.5,153.9 L836.8,152.4 L835.9,150.9 L834.8,149.6 L833.4,148.3 L831.9,147.0 L830.1,145.9" fill="none" stroke="#8c7a34" stroke-width="1.1"/>
<path d="M512.3,450.4 L507.9,452.9 L410.9,508.9 L406.6,511.4 L402.3,508.9 L304.4,452.4 L300.1,449.9 L168.4,373.9 L163.2,370.9 L116.5,343.9 L112.2,341.4 L116.5,338.9 L240.3,267.4 L244.7,264.9 L320.9,220.9 L-8.2,30.9 L-3.9,28.4 L325.2,218.4 L329.5,220.9 L376.3,247.9 L381.5,250.9 L460.3,296.4 L464.6,298.9 L513.1,326.9 L517.5,329.4 L615.3,385.9 L619.6,388.4 L615.3,390.9 L512.3,450.4ZM401.4,391.4 L405.7,388.9 L507.9,447.9 L611.0,388.4 L513.1,331.9 L438.6,374.9 L434.3,377.4 L430.8,379.4 L426.5,376.9 L430.0,374.9 L377.2,344.4 L381.5,341.9 L434.3,372.4 L508.8,329.4 L460.3,301.4 L403.1,334.4 L398.8,331.9 L456.0,298.9 L377.2,253.4 L300.9,297.4 L360.7,331.9 L356.4,334.4 L296.6,299.9 L172.8,371.4 L304.4,447.4 L384.1,401.4 L388.4,403.9 L308.7,449.9 L406.6,506.4 L503.6,450.4 L401.4,391.4ZM244.7,269.9 L120.8,341.4 L167.6,368.4 L291.4,296.9 L244.7,269.9ZM325.2,223.4 L249.0,267.4 L295.7,294.4 L372.0,250.4 L325.2,223.4ZM1023.2,155.4 L915.8,217.4 L911.5,219.9 L814.5,275.9 L810.2,278.4 L805.8,275.9 L708.0,219.4 L703.6,216.9 L572.0,140.9 L566.8,137.9 L191.0,-79.1 L186.6,-81.6 L191.0,-84.1 L314.8,-155.6 L319.1,-158.1 L399.7,-204.6 L404.0,-202.1 L323.5,-155.6 L699.3,61.4 L779.9,14.9 L785.1,17.9 L704.5,64.4 L764.3,98.9 L759.9,101.4 L700.2,66.9 L576.3,138.4 L708.0,214.4 L787.7,168.4 L792.0,170.9 L712.3,216.9 L810.2,273.4 L907.2,217.4 L805.0,158.4 L809.3,155.9 L911.5,214.9 L1018.9,152.9 L1268.3,8.9 L1272.6,11.4 L1023.2,155.4ZM195.3,-81.6 L571.1,135.4 L695.0,63.9 L319.1,-153.1 L195.3,-81.6ZM842.2,141.9 L837.9,144.4 L834.4,146.4 L830.1,143.9 L833.6,141.9 L780.7,111.4 L785.1,108.9 L837.9,139.4 L916.7,93.9 L921.0,96.4 L842.2,141.9ZM806.7,101.4 L802.4,98.9 L863.9,63.4 L868.2,65.9 L806.7,101.4Z" fill="none" stroke="#e4e4e4" stroke-width="1.05"/>
<path d="M795.4,286.9 L431.7,76.9" stroke="#c4202c" stroke-width="1.3" fill="none"/>
<path d="M795.4,286.9 L787.3,280.6 L784.5,282.2ZM692.4,227.4 L684.2,221.1 L681.5,222.7ZM692.4,227.4 L703.3,232.1 L700.5,233.7ZM552.1,146.4 L544.0,140.1 L541.2,141.7ZM552.1,146.4 L563.0,151.1 L560.2,152.7Z" fill="#e02a36" stroke="#e02a36" stroke-width="0.6"/>
<path d="M550.4,145.4 L543.4,141.4" stroke="#26338a" stroke-width="3" fill="none" transform="translate(3,1.5)"/>
<text x="0" y="0" transform="translate(494.9,136.9) rotate(210)" font-family="Liberation Sans" font-weight="bold" font-size="8.5" fill="#f4f4f4" text-anchor="middle" dominant-baseline="central">2.85</text>
<text x="0" y="0" transform="translate(602.3,198.9) rotate(210)" font-family="Liberation Sans" font-weight="bold" font-size="8.5" fill="#f4f4f4" text-anchor="middle" dominant-baseline="central">6.3</text>
<text x="0" y="0" transform="translate(724.0,269.1) rotate(210)" font-family="Liberation Sans" font-weight="bold" font-size="8.5" fill="#f4f4f4" text-anchor="middle" dominant-baseline="central">3.05</text>
<g transform="translate(0.0,0.0)" fill="none" stroke="#f4f4f4" stroke-width="1.9" stroke-linecap="round" stroke-linejoin="round"><path d="M378.5,452 Q381,456.5 384,458 Q388.5,459.5 393,456.5 Q397.5,453 398,448 L398,443"/><path d="M395,442 Q395,437.5 399,438 Q402,438.5 402.5,441.5 L410.5,440.5 L400.5,445.5 Q396.5,446 395,442z" fill="#f4f4f4"/><path d="M374.2,448.8 l0.6,0.6 M399.5,435.5 l0.8,0 M389.5,451 l1.5,-1" stroke-width="2.3"/></g>
<g transform="translate(403.6,-233.0)" fill="none" stroke="#f4f4f4" stroke-width="1.9" stroke-linecap="round" stroke-linejoin="round"><path d="M378.5,452 Q381,456.5 384,458 Q388.5,459.5 393,456.5 Q397.5,453 398,448 L398,443"/><path d="M395,442 Q395,437.5 399,438 Q402,438.5 402.5,441.5 L410.5,440.5 L400.5,445.5 Q396.5,446 395,442z" fill="#f4f4f4"/><path d="M374.2,448.8 l0.6,0.6 M399.5,435.5 l0.8,0 M389.5,451 l1.5,-1" stroke-width="2.3"/></g>
<g fill="none" stroke="#f0f0f0" stroke-width="1.8" stroke-linecap="round"><path d="M813,120 q3,2 6,0 q2,-3 5,-4 l5,-4 l-6,-1 q-2,3 -4,5"/><path d="M822,111 l1,0 M827,119 l1,-1"/></g></svg>
<div class="a" style="left:0px;top:105px;width:1px;height:537px;background:#9a9a9a"></div>
<div class="t" style="left:5.0px;top:110.7px;font-size:8.6px;font-weight:bold;color:#f2f2f2;font-family:'Liberation Sans';font-style:normal;">[−] [Isométrique orienté...] [Filaire 2D]</div>
<div class="a" style="left:896px;top:17px;width:4px;height:688px;background:#000"></div>
<div class="a" style="left:0px;top:640px;width:896px;height:1px;background:#0c1016"></div>
<div class="a" style="left:0px;top:641px;width:896px;height:12px;background:linear-gradient(#ffffff 0,#ffffff 1px,#eceef0 1px,#f2f2f2 10px,#ffffff 11px)"></div>
<svg class="a" style="left:0;top:642px" width="900" height="12" viewBox="0 642 900 12"><path d="M3,644 v6 M4,647 l3,-3 v6z M14,647 l3,-3 v6z M26,644 l3,3 l-3,3z M36,644 l3,3 l-3,3z M40,644 v6" stroke="#333" stroke-width="0.8" fill="#333"/><path d="M44,652 L48,643 L78,643 L74,652Z" fill="#1e232d"/><path d="M74,652 L78,643 L133,643 L129,652" fill="none" stroke="#555" stroke-width="0.8"/><path d="M129,652 L133,643 L192,643 L188,652" fill="none" stroke="#555" stroke-width="0.8"/><path d="M1.5,643.5 h10 v8 h-10z M11.5,643.5 h10 v8 h-10z M21.5,643.5 h10 v8 h-10z M31.5,643.5 h10 v8 h-10z" fill="none" stroke="#bbb" stroke-width="0.8"/></svg>
<div class="t" style="left:50.5px;top:644.1px;font-size:7.6px;font-weight:normal;color:#f0f0f0;font-family:'Liberation Sans';font-style:normal;">Objet</div>
<div class="t" style="left:80.5px;top:644.1px;font-size:7.6px;font-weight:normal;color:#111;font-family:'Liberation Sans';font-style:normal;">Présentation1</div>
<div class="t" style="left:139.0px;top:644.1px;font-size:7.6px;font-weight:normal;color:#111;font-family:'Liberation Sans';font-style:normal;">Présentation2</div>
<div class="a" style="left:0px;top:653px;width:896px;height:4px;background:linear-gradient(#2e2e2e,#6a6a6a)"></div>
<div class="a" style="left:0px;top:657px;width:896px;height:1px;background:#e4e4e4"></div>
<div class="a" style="left:0px;top:657px;width:896px;height:35px;background:#cdcdcd"></div>
<div class="a" style="left:0px;top:657px;width:10px;height:47px;background:#9a9a9a"></div>
<div class="a" style="left:1px;top:658px;width:8px;height:2px;background:#666"></div>
<div class="a" style="left:10px;top:691px;width:886px;height:1px;background:#999"></div>
<div class="a" style="left:10px;top:692px;width:886px;height:12px;background:#fff"></div>
<div class="t" style="left:12.0px;top:658.6px;font-size:8.2px;font-weight:normal;color:#111;font-family:'Liberation Mono';font-style:normal;-webkit-text-stroke:0.3px #111">Commande: Spécifiez le coin opposé ou [Trajet/SPolygone/CPolygone]:</div>
<div class="t" style="left:12.0px;top:669.6px;font-size:8.2px;font-weight:normal;color:#111;font-family:'Liberation Mono';font-style:normal;-webkit-text-stroke:0.3px #111">Commande: *Annuler*</div>
<div class="t" style="left:12.0px;top:679.6px;font-size:8.2px;font-weight:normal;color:#111;font-family:'Liberation Mono';font-style:normal;-webkit-text-stroke:0.3px #111">Commande:</div>
<div class="t" style="left:12.0px;top:695.6px;font-size:8.2px;font-weight:normal;color:#111;font-family:'Liberation Mono';font-style:normal;-webkit-text-stroke:0.3px #111">Commande:</div>
<div class="a" style="left:0px;top:704px;width:900px;height:16px;background:linear-gradient(#222 0,#222 1px,#a0a0a0 1px,#a0a0a0 2px,#8c8c8c 3px,#7c7c7c 13px,#3a3a3a 13px,#3a3a3a 14px,#6a6a6a 14px)"></div>
<div class="t" style="left:10.0px;top:708.4px;font-size:8.4px;font-weight:normal;color:#a4a4a4;font-family:'Liberation Sans';font-style:normal;">-2.5535, -1.5620, 0.0000</div>
<svg class="a" style="left:0;top:704px" width="900" height="16" viewBox="0 704 900 16"><rect x="120" y="704.5" width="226" height="15" fill="#b0b0b0"/>
<rect x="122.5" y="705.5" width="13.7" height="13.5" fill="#cdcdcd" stroke="#8a8a8a" stroke-width="0.8"/>
<rect x="138.5" y="705.5" width="13.7" height="13.5" fill="#cdcdcd" stroke="#8a8a8a" stroke-width="0.8"/>
<rect x="153.2" y="705.5" width="13.7" height="13.5" fill="#cdcdcd" stroke="#8a8a8a" stroke-width="0.8"/>
<rect x="167.8" y="705.5" width="13.7" height="13.5" fill="#bfe0f0" stroke="#8a8a8a" stroke-width="0.8"/>
<rect x="185.2" y="705.5" width="13.7" height="13.5" fill="#cdcdcd" stroke="#8a8a8a" stroke-width="0.8"/>
<rect x="199.8" y="705.5" width="13.7" height="13.5" fill="#d6ecf8" stroke="#8a8a8a" stroke-width="0.8"/>
<rect x="215.8" y="705.5" width="13.7" height="13.5" fill="#d6ecf8" stroke="#8a8a8a" stroke-width="0.8"/>
<rect x="230.5" y="705.5" width="13.7" height="13.5" fill="#cdcdcd" stroke="#8a8a8a" stroke-width="0.8"/>
<rect x="246.5" y="705.5" width="13.7" height="13.5" fill="#d6ecf8" stroke="#8a8a8a" stroke-width="0.8"/>
<rect x="261.2" y="705.5" width="13.7" height="13.5" fill="#d6ecf8" stroke="#8a8a8a" stroke-width="0.8"/>
<rect x="277.2" y="705.5" width="13.7" height="13.5" fill="#cdcdcd" stroke="#8a8a8a" stroke-width="0.8"/>
<rect x="293.2" y="705.5" width="13.7" height="13.5" fill="#9cc8e8" stroke="#8a8a8a" stroke-width="0.8"/>
<rect x="307.8" y="705.5" width="13.7" height="13.5" fill="#cdcdcd" stroke="#8a8a8a" stroke-width="0.8"/>
<rect x="323.8" y="705.5" width="13.7" height="13.5" fill="#cdcdcd" stroke="#8a8a8a" stroke-width="0.8"/>
<path d="M125,712.2 h8 M129,708.2 v8" stroke="#111" stroke-width="1.6"/><circle cx="132" cy="715.2" r="1.8" fill="none" stroke="#a03030" stroke-width="0.8"/>
<path d="M141,709.2 h8 M141,712.2 h8 M141,715.2 h8" stroke="#111" stroke-width="0.8"/>
<path d="M155,707.2 v10 M157.5,707.2 v10 M160,707.2 v10 M162.5,707.2 v10 M165,707.2 v10 M154,708.2 h12 M154,710.7 h12 M154,713.2 h12 M154,715.7 h12" stroke="#111" stroke-width="0.6"/>
<path d="M170,707.2 v9 h10" fill="none" stroke="#1a5a90" stroke-width="1.3"/>
<circle cx="191.5" cy="713.2" r="3.5" fill="none" stroke="#111" stroke-width="1.1"/><path d="M189,715.2 l7,-7" stroke="#111" stroke-width="1"/>
<rect x="202.5" y="708.2" width="8" height="9" fill="#fff" stroke="#111" stroke-width="0.9"/><circle cx="202.5" cy="708.2" r="1.2" fill="#e0a040"/>
<path d="M218,716.2 v-5 q0,-4 5,-4 h4 v5 q0,4 -4,4z" fill="none" stroke="#111" stroke-width="1"/><circle cx="218.5" cy="716.2" r="1.5" fill="none" stroke="#a03030" stroke-width="0.8"/>
<path d="M233,716.2 h10 M233,716.2 l8,-8" stroke="#111" stroke-width="1.1"/>
<path d="M248,707.2 v9 h10" fill="none" stroke="#1a5a90" stroke-width="1.1"/><path d="M249,715.2 l8,-8" stroke="#d8a020" stroke-width="1.6"/>
<path d="M263,710.2 h7 M266,707.2 v6 M269,713.2 v4 h4" fill="none" stroke="#111" stroke-width="1.3"/>
<path d="M278.5,712.2 h10 M283.5,707.2 v10" stroke="#111" stroke-width="1.8"/>
<path d="M294.5,707.2 h10 v10 h-10z" fill="#9cc8e8" stroke="#3a7ab0" stroke-width="1" /><path d="M295,710.2 h9 M295,713.2 h9 M297.5,707.2 v10 M300.5,707.2 v10" stroke="#5a9ad0" stroke-width="0.6"/>
<rect x="310.5" y="708.2" width="7" height="8" fill="#fff" stroke="#111" stroke-width="1.1"/>
<path d="M326,709.2 h5 M328.5,706.7 v5" stroke="#111" stroke-width="1"/><rect x="329" y="712.2" width="7" height="6" fill="#5ab84a" stroke="#2a6a2a" stroke-width="0.8"/>
<rect x="652" y="704.5" width="244" height="15" fill="#a9a9a9"/>
<rect x="652.5" y="705.5" width="29" height="13.5" fill="#d4d4d4" stroke="#8a8a8a" stroke-width="0.8"/>
<text x="654" y="715.8" font-family="Liberation Sans" font-size="8.6" fill="#111">OBJET</text>
<rect x="683.5" y="705.5" width="12.5" height="13.5" fill="#d0d0d0" stroke="#8a8a8a" stroke-width="0.8"/>
<rect x="697.5" y="705.5" width="14.5" height="13.5" fill="#d0d0d0" stroke="#8a8a8a" stroke-width="0.8"/>
<rect x="724.1" y="705.5" width="30.899999999999977" height="13.5" fill="#d0d0d0" stroke="#8a8a8a" stroke-width="0.8"/>
<rect x="758.5" y="705.5" width="13.5" height="13.5" fill="#d0d0d0" stroke="#8a8a8a" stroke-width="0.8"/>
<rect x="774.1" y="705.5" width="12.899999999999977" height="13.5" fill="#d0d0d0" stroke="#8a8a8a" stroke-width="0.8"/>
<rect x="793.5" y="705.5" width="13" height="13.5" fill="#d0d0d0" stroke="#8a8a8a" stroke-width="0.8"/>
<rect x="808.5" y="705.5" width="12.5" height="13.5" fill="#d0d0d0" stroke="#8a8a8a" stroke-width="0.8"/>
<rect x="824.1" y="705.5" width="12.899999999999977" height="13.5" fill="#d0d0d0" stroke="#8a8a8a" stroke-width="0.8"/>
<rect x="885.2" y="705.5" width="10.299999999999955" height="13.5" fill="#d0d0d0" stroke="#8a8a8a" stroke-width="0.8"/>
<rect x="840" y="705" width="33" height="14.5" fill="#6a6a6a"/><rect x="841" y="706" width="15" height="12.5" fill="#c8c8c8"/><rect x="857" y="706" width="15" height="12.5" fill="#c8c8c8"/>
<rect x="874" y="705" width="10" height="14.5" fill="#b8b8b8"/><path d="M876.5,711 h5 l-2.5,3z" fill="#111"/>
<rect x="686" y="708" width="8" height="8" fill="#fff" stroke="#111" stroke-width="1"/><path d="M688,709.5 l4,4" stroke="#111" stroke-width="0.8"/>
<rect x="700" y="708" width="5" height="5" fill="#fff" stroke="#111" stroke-width="1"/><rect x="705" y="708" width="5" height="5" fill="#fff" stroke="#111" stroke-width="1"/><path d="M699,715.5 h12" stroke="#111" stroke-width="1"/>
<path d="M727,716 l4,-3 l4,3 M731,713 v-5" fill="none" stroke="#111" stroke-width="1.2"/>
<text x="738" y="716" font-family="Liberation Sans" font-size="8.6" fill="#111">1:1</text><path d="M750,710 h5 l-2.5,3z" fill="#111"/>
<path d="M761,716 l4,-3 l4,3 M765,713 v-5" fill="none" stroke="#111" stroke-width="1.1"/><circle cx="769" cy="714" r="2.5" fill="#f0d040"/>
<path d="M776,716 l4,-3 l4,3 M780,713 v-5" fill="none" stroke="#888" stroke-width="1.1"/>
<circle cx="800" cy="712" r="4" fill="none" stroke="#111" stroke-width="1.6" stroke-dasharray="1.5 1"/><circle cx="800" cy="712" r="1.8" fill="none" stroke="#111" stroke-width="0.8"/>
<rect x="810" y="712" width="6" height="5" fill="#fff" stroke="#111" stroke-width="1"/><path d="M814,712 v-3 q2,-3 4,0" fill="none" stroke="#111" stroke-width="1"/>
<rect x="825" y="708" width="10" height="7" fill="#eee" stroke="#111" stroke-width="0.8"/><circle cx="834" cy="715" r="2.5" fill="#5a9ad0"/>
<rect x="843" y="708" width="9" height="8" fill="#3a8ad0"/><path d="M843,713 l3,3 l6,-6" fill="none" stroke="#e0d020" stroke-width="1.4"/>
<circle cx="864" cy="711" r="3" fill="#f4e060"/><rect x="862.5" y="714" width="3" height="3" fill="#888"/>
<rect x="887" y="707" width="9" height="10" fill="#fff" stroke="#333" stroke-width="0.8"/></svg>
<div class="a" style="left:92px;top:74px;width:250px;height:287px;background:#fffeeb;border:1px solid #3a3a3a;box-shadow:1px 1px 0 #222"></div>
<div class="t" style="left:97.6px;top:82.0px;font-size:8.6px;font-weight:bold;color:#111;font-family:'Liberation Sans';font-style:normal;-webkit-text-stroke:0.15px #111">Appuyer/tirer</div>
<div class="t" style="left:97.6px;top:97.0px;font-size:8.25px;font-weight:normal;color:#111;font-family:'Liberation Sans';font-style:normal;-webkit-text-stroke:0.2px #111">Appuie/tire sur des zones délimitées</div>
<div class="t" style="left:98.0px;top:119.4px;font-size:8.37px;font-weight:normal;color:#111;font-family:'Liberation Sans';font-style:normal;-webkit-text-stroke:0.2px #111">Appuyez ou tirez sur une zone délimitée en cliquant à l'intérieur</div>
<div class="t" style="left:98.0px;top:130.8px;font-size:8.25px;font-weight:normal;color:#111;font-family:'Liberation Sans';font-style:normal;-webkit-text-stroke:0.2px #111">de la zone, puis en déplaçant le curseur ou en entrant une valeur</div>
<div class="t" style="left:98.0px;top:140.8px;font-size:8.3px;font-weight:normal;color:#111;font-family:'Liberation Sans';font-style:normal;-webkit-text-stroke:0.2px #111">pour spécifier la distance d'extrusion.</div>
<div class="t" style="left:98.0px;top:158.3px;font-size:8.36px;font-weight:normal;color:#111;font-family:'Liberation Sans';font-style:normal;-webkit-text-stroke:0.2px #111">La commande se répète automatiquement jusqu'à ce que vous</div>
<div class="t" style="left:98.0px;top:168.2px;font-size:8.3px;font-weight:normal;color:#111;font-family:'Liberation Sans';font-style:normal;-webkit-text-stroke:0.2px #111">appuyiez sur ECHAP, ENTREE ou ESPACE.</div>
<svg class="a" style="left:92px;top:74px" width="250" height="287" viewBox="92 74 250 287"><path d="M143.3,226.4 L212.3,267.3 L149.7,303.1 L122.4,288.5 L153.6,272.4 L113.9,243.3ZM143.3,230.1 L119.8,243.6 L159.6,272.9 L129.3,288.5 L149.7,299.4 L206.0,267.2Z" fill="#b8b8b8" fill-rule="evenodd" stroke="#222" stroke-width="0.9"/>
<text x="179" y="297" font-family="Liberation Sans" font-weight="bold" font-size="8" fill="#2a7a2a">1</text>
<rect x="172" y="285" width="3" height="3" fill="none" stroke="#3a8a3a" stroke-width="0.7"/>
<path d="M202.1,203 V232.3" stroke="#222" stroke-width="0.9"/><path d="M199.5,208 L202.1,202.5 L204.7,208 M199.5,227 L202.1,232.5 L204.7,227" fill="none" stroke="#222" stroke-width="0.8"/>
<path d="M195.7,197.8 L214.9,209.3 M195.7,228.4 L214.9,239.9" stroke="#222" stroke-width="0.9"/>
<path d="M250.5,226.7 L319.5,267.6 L256.9,303.4 L229.6,288.8 L260.8,272.7 L221.1,243.6ZM250.5,230.4 L227.0,243.9 L266.8,273.2 L236.5,288.8 L256.9,299.7 L313.2,267.5Z" fill="#e8a0a8" fill-opacity="0.55" fill-rule="evenodd" stroke="#4a2030" stroke-width="0.6"/>
<path d="M250.5,200.4 L227.0,213.9 L227.0,243.9 L250.5,230.4Z" fill="#9a66b2" fill-opacity="0.6" stroke="#3a1420" stroke-width="0.8"/>
<path d="M227.0,213.9 L266.8,243.2 L266.8,273.2 L227.0,243.9Z" fill="#e48a96" fill-opacity="0.6" stroke="#3a1420" stroke-width="0.8"/>
<path d="M266.8,243.2 L236.5,258.8 L236.5,288.8 L266.8,273.2Z" fill="#9a66b2" fill-opacity="0.6" stroke="#3a1420" stroke-width="0.8"/>
<path d="M236.5,258.8 L256.9,269.7 L256.9,299.7 L236.5,288.8Z" fill="#e48a96" fill-opacity="0.6" stroke="#3a1420" stroke-width="0.8"/>
<path d="M256.9,269.7 L313.2,237.5 L313.2,267.5 L256.9,299.7Z" fill="#9a66b2" fill-opacity="0.6" stroke="#3a1420" stroke-width="0.8"/>
<path d="M313.2,237.5 L250.5,200.4 L250.5,230.4 L313.2,267.5Z" fill="#e48a96" fill-opacity="0.6" stroke="#3a1420" stroke-width="0.8"/>
<path d="M250.5,196.7 L319.5,237.6 L319.5,267.6 L250.5,226.7Z" fill="#e48a96" fill-opacity="0.6" stroke="#3a1420" stroke-width="0.8"/>
<path d="M319.5,237.6 L256.9,273.4 L256.9,303.4 L319.5,267.6Z" fill="#9a66b2" fill-opacity="0.6" stroke="#3a1420" stroke-width="0.8"/>
<path d="M256.9,273.4 L229.6,258.8 L229.6,288.8 L256.9,303.4Z" fill="#e48a96" fill-opacity="0.6" stroke="#3a1420" stroke-width="0.8"/>
<path d="M229.6,258.8 L260.8,242.7 L260.8,272.7 L229.6,288.8Z" fill="#9a66b2" fill-opacity="0.6" stroke="#3a1420" stroke-width="0.8"/>
<path d="M260.8,242.7 L221.1,213.6 L221.1,243.6 L260.8,272.7Z" fill="#e48a96" fill-opacity="0.6" stroke="#3a1420" stroke-width="0.8"/>
<path d="M221.1,213.6 L250.5,196.7 L250.5,226.7 L221.1,243.6Z" fill="#9a66b2" fill-opacity="0.6" stroke="#3a1420" stroke-width="0.8"/>
<path d="M250.5,196.7 L319.5,237.6 L256.9,273.4 L229.6,258.8 L260.8,242.7 L221.1,213.6ZM250.5,200.4 L227.0,213.9 L266.8,243.2 L236.5,258.8 L256.9,269.7 L313.2,237.5Z" fill="#ec9ea6" fill-opacity="0.75" fill-rule="evenodd" stroke="#3a1a24" stroke-width="0.9"/></svg>
<div class="a" style="left:93px;top:323px;width:248px;height:1px;background:#cfcbb0"></div>
<svg class="a" style="left:97px;top:328px" width="11" height="10" viewBox="0 0 11 10"><rect x="0.5" y="0.5" width="10" height="9" fill="#f6f0a0" stroke="#333" stroke-width="0.8"/><rect x="0.5" y="6" width="10" height="3.5" fill="#222"/></svg>
<div class="t" style="left:110.7px;top:328.8px;font-size:7.8px;font-weight:bold;color:#111;font-family:'Liberation Sans';font-style:normal;">APPTIRER</div>
<div class="t" style="left:97.3px;top:345.5px;font-size:8.1px;font-weight:bold;color:#111;font-family:'Liberation Sans';font-style:normal;-webkit-text-stroke:0.15px #111">Appuyez sur F1 pour obtenir de l'aide</div>
</body></html>
